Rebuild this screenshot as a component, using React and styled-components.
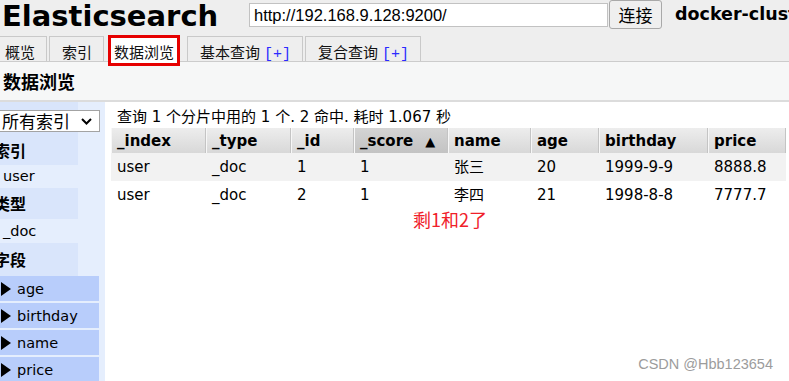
import React from 'react';
import styled, { createGlobalStyle } from 'styled-components';

const GlobalStyle = createGlobalStyle`
  html, body { margin: 0; padding: 0; background: #fff; }
  body {
    width: 789px; height: 381px; overflow: hidden;
    font-family: "DejaVu Sans", "Noto Sans CJK SC", sans-serif;
    color: #000;
  }
`;

const Frame = styled.div`
  position: relative;
  width: 789px;
  height: 381px;
  overflow: hidden;
`;

const Page = styled.div`
  margin-left: -8px;
  width: 805px;
  height: 381px;
  display: flex;
  flex-direction: column;
`;

const TopBar = styled.div`
  background: #eeeeee;
`;

const Header = styled.header`
  display: flex;
  align-items: flex-start;
  height: 33px;
  overflow: hidden;
`;

const Brand = styled.h1`
  margin: 0;
  width: 257px;
  flex-shrink: 0;
  box-sizing: border-box;
  padding-left: 10px;
  font: bold 29px/33px "DejaVu Sans", sans-serif;
  white-space: nowrap;
`;

const UrlInput = styled.input`
  flex-shrink: 0;
  width: 359px;
  height: 24px;
  margin: 3px 0 0;
  box-sizing: border-box;
  border: 1px solid #c2c2c2;
  background: #fff;
  padding: 0 4px;
  font: 16.5px "Liberation Sans", sans-serif;
  color: #000;
  outline: none;
`;

const ConnectButton = styled.button`
  flex-shrink: 0;
  margin-left: 1px;
  width: 53px;
  height: 29px;
  padding: 0;
  border: 1px solid #a9a9a9;
  border-radius: 3px;
  background: #efefef;
  font: 17px "Noto Sans CJK SC", sans-serif;
  color: #000;
`;

const ClusterName = styled.span`
  flex-shrink: 0;
  margin-left: 13px;
  font: bold 17.5px/29px "DejaVu Sans", sans-serif;
  white-space: nowrap;
`;

const TabRow = styled.nav`
  display: flex;
  align-items: flex-start;
  height: 25px;
  margin-top: 3px;
  border-bottom: 1px solid #cccccc;
`;

const Tab = styled.div`
  box-sizing: border-box;
  height: ${p => (p.$active ? 31 : 25)}px;
  margin: ${p => (p.$active ? '-1px 7px -5px 2px' : '0 2px 0 0')};
  padding: ${p => (p.$active ? '6px 3px 0' : '7px 11px 0 12px')};
  border: ${p => (p.$active ? '3px solid #e60000' : '1px solid #c9c9c9')};
  border-bottom: ${p => (p.$active ? '3px solid #e60000' : 'none')};
  background: ${p => (p.$active ? '#ffffff' : '#eeeeee')};
  position: ${p => (p.$active ? 'relative' : 'static')};
  z-index: ${p => (p.$active ? 2 : 'auto')};
  font: 15px/16px "Noto Sans CJK SC", sans-serif;
  color: #111;
  white-space: nowrap;
`;

const Plus = styled.span`
  margin-left: 4px;
  font: 15px "Liberation Mono", monospace;
  color: #2b2bff;
`;

const TitleBar = styled.h2`
  margin: 0;
  height: 38px;
  padding-left: 11px;
  background: #f6f7f7;
  border-bottom: 2px solid #dcdcdc;
  font: bold 18px/38px "Noto Sans CJK SC", sans-serif;
`;

const Content = styled.div`
  flex: 1;
  display: flex;
  min-height: 0;
`;

const Sidebar = styled.aside`
  width: 113px;
  flex-shrink: 0;
  background: #e5eefd;
  display: flex;
  flex-direction: column;
`;

const IndexBlock = styled.div`
  width: 86px;
  background: #d9e5fb;
  padding: 8px 0 3px;
`;

const SelectBox = styled.div`
  box-sizing: border-box;
  width: 102px;
  height: 22px;
  margin-left: 6px;
  display: flex;
  align-items: center;
  justify-content: space-between;
  padding: 0 7px 0 3px;
  background: #fff;
  border: 1px solid #a3a3a3;
  font: 17px/20px "Noto Sans CJK SC", sans-serif;
  white-space: nowrap;
`;

const SectionLabel = styled.div`
  width: 86px;
  box-sizing: border-box;
  padding-left: 2px;
  height: ${p => p.$h}px;
  margin-top: ${p => p.$mt || 0}px;
  background: ${p => (p.$plain ? 'transparent' : '#d9e5fb')};
  font: bold 16px "Noto Sans CJK SC", sans-serif;
  line-height: ${p => p.$h}px;
`;

const SideItem = styled.div`
  height: ${p => p.$h}px;
  line-height: ${p => p.$h}px;
  padding-left: 11px;
  font-size: 14.5px;
`;

const FieldItem = styled.div`
  width: 107px;
  height: 25px;
  margin-bottom: 2px;
  box-sizing: border-box;
  padding-left: 9px;
  display: flex;
  align-items: center;
  gap: 6px;
  background: #b8cdfb;
  font-size: 14.5px;
  flex-shrink: 0;
`;

const Arrow = styled.span`
  width: 0;
  height: 0;
  border-left: 10px solid #000;
  border-top: 7px solid transparent;
  border-bottom: 7px solid transparent;
`;

const Main = styled.main`
  flex: 1;
  background: #fff;
  padding: 4px 0 0 6px;
`;

const QueryInfo = styled.div`
  padding-left: 6px;
  font-size: 15px;
  line-height: 22px;
  white-space: nowrap;
`;

const Table = styled.table`
  border-collapse: separate;
  border-spacing: 0;
  table-layout: fixed;
  width: 675px;
`;

const Th = styled.th`
  width: ${p => p.$w}px;
  height: 25px;
  padding: 0 0 0 6px;
  box-sizing: border-box;
  text-align: left;
  font: bold 15px/18px "DejaVu Sans", sans-serif;
  white-space: nowrap;
  background: ${p =>
    p.$sorted
      ? 'linear-gradient(#d4d4d4, #c3c3c3)'
      : 'linear-gradient(#ededed, #d8d8d8)'};
  box-shadow: inset 1px 0 #f7f7f7, inset -1px 0 #c4c4c4;
`;

const SortMark = styled.span`
  margin-left: 12px;
  font-size: 13px;
  line-height: 1;
`;

const Tr = styled.tr`
  background: ${p => (p.$odd ? '#f2f2f2' : '#ffffff')};
`;

const Td = styled.td`
  height: 28px;
  padding: 0 0 0 6px;
  font-size: 15px;
  line-height: 18px;
  vertical-align: middle;
  white-space: nowrap;
`;

const Note = styled.div`
  padding-left: 302px;
  font: 18px/20px "Noto Sans CJK SC", sans-serif;
  color: #f0202a;
`;

const Watermark = styled.div`
  position: absolute;
  right: 16px;
  top: 356px;
  font: 14.5px/17px "Liberation Sans", sans-serif;
  color: #9c9c9c;
`;

const Chevron = () => (
  <svg width="11" height="7" viewBox="0 0 11 7">
    <path d="M1 1l4.5 4.5L10 1" fill="none" stroke="#000" strokeWidth="2" />
  </svg>
);

const columns = [
  { key: '_index', w: 95 },
  { key: '_type', w: 85 },
  { key: '_id', w: 63 },
  { key: '_score', w: 94, sorted: true },
  { key: 'name', w: 83 },
  { key: 'age', w: 68 },
  { key: 'birthday', w: 109 },
  { key: 'price', w: 78 },
];

const rows = [
  ['user', '_doc', '1', '1', '张三', '20', '1999-9-9', '8888.8'],
  ['user', '_doc', '2', '1', '李四', '21', '1998-8-8', '7777.7'],
];

const fields = ['age', 'birthday', 'name', 'price'];

export default function App() {
  return (
    <Frame>
      <GlobalStyle />
      <Page>
        <TopBar>
          <Header>
            <Brand>Elasticsearch</Brand>
            <UrlInput defaultValue="http://192.168.9.128:9200/" readOnly />
            <ConnectButton>连接</ConnectButton>
            <ClusterName>docker-cluster</ClusterName>
          </Header>
          <TabRow>
            <Tab>概览</Tab>
            <Tab>索引</Tab>
            <Tab $active>数据浏览</Tab>
            <Tab>基本查询<Plus>[+]</Plus></Tab>
            <Tab>复合查询<Plus>[+]</Plus></Tab>
          </TabRow>
        </TopBar>
        <TitleBar>数据浏览</TitleBar>
        <Content>
          <Sidebar>
            <IndexBlock>
              <SelectBox>
                <span>所有索引</span>
                <Chevron />
              </SelectBox>
              <SectionLabel $h={24} $mt={6} $plain>索引</SectionLabel>
            </IndexBlock>
            <SideItem $h={23}>user</SideItem>
            <SectionLabel $h={31}>类型</SectionLabel>
            <SideItem $h={24}>_doc</SideItem>
            <SectionLabel $h={33}>字段</SectionLabel>
            {fields.map(f => (
              <FieldItem key={f}>
                <Arrow />
                <span>{f}</span>
              </FieldItem>
            ))}
          </Sidebar>
          <Main>
            <QueryInfo>查询 1 个分片中用的 1 个. 2 命中. 耗时 1.067 秒</QueryInfo>
            <Table>
              <thead>
                <tr>
                  {columns.map(c => (
                    <Th key={c.key} $w={c.w} $sorted={c.sorted}>
                      {c.key}
                      {c.sorted && <SortMark>▲</SortMark>}
                    </Th>
                  ))}
                </tr>
              </thead>
              <tbody>
                {rows.map((r, i) => (
                  <Tr key={i} $odd={i % 2 === 0}>
                    {r.map((v, j) => (
                      <Td key={j}>{v}</Td>
                    ))}
                  </Tr>
                ))}
              </tbody>
            </Table>
            <Note>剩1和2了</Note>
          </Main>
        </Content>
      </Page>
      <Watermark>CSDN @Hbb123654</Watermark>
    </Frame>
  );
}
